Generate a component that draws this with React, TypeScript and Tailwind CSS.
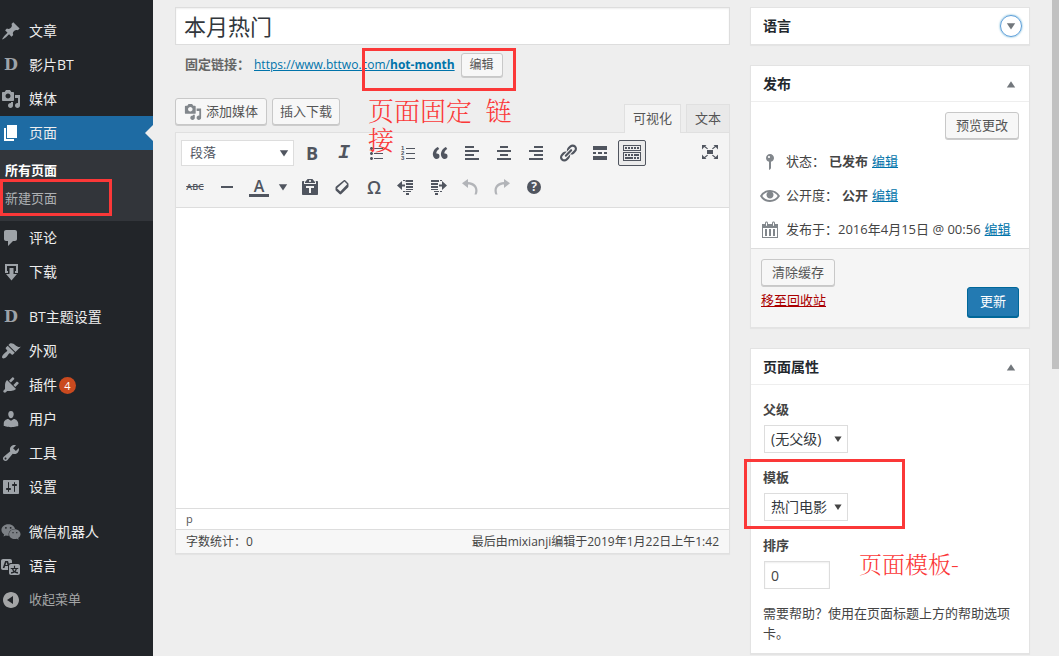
import type { ReactNode } from "react"
import { FaWeixin } from "react-icons/fa"

const icons = {
    post: "M10.44 3.02l1.82-1.82 6.36 6.35-1.83 1.82c-1.05-.68-2.48-.57-3.41.36l-.75.75c-.92.93-1.04 2.35-.35 3.41l-1.83 1.82-2.41-2.41-2.8 2.79c-.42.42-3.38 2.71-3.8 2.29s1.86-3.39 2.28-3.81l2.79-2.79L4.1 9.36l1.83-1.82c1.05.69 2.48.57 3.4-.36l.75-.75c.93-.92 1.05-2.35.36-3.41z",
    media: "M13 11V4c0-.55-.45-1-1-1h-1.67L9 1H5L3.67 3H2c-.55 0-1 .45-1 1v7c0 .55.45 1 1 1h10c.55 0 1-.45 1-1zM7 4.5c1.38 0 2.5 1.12 2.5 2.5S8.38 9.5 7 9.5 4.5 8.38 4.5 7 5.62 4.5 7 4.5zM14 6h5v10.5c0 1.38-1.12 2.5-2.5 2.5S14 17.88 14 16.5s1.12-2.5 2.5-2.5c.17 0 .34.02.5.05V9h-3V6zm-4 8.05V13h2v3.5c0 1.38-1.12 2.5-2.5 2.5S7 17.88 7 16.5 8.12 14 9.5 14c.17 0 .34.02.5.05z",
    page: "M6 15V2h10v13H6zm-1 1h8v2H3V5h2v11z",
    comments: "M5 2h9c1.1 0 2 .9 2 2v7c0 1.1-.9 2-2 2h-2l-5 5v-5H5c-1.1 0-2-.9-2-2V4c0-1.1.9-2 2-2z",
    download: "M4 2h13v9h-3V9h1V4H6v5h1v2H4zM8.5 6h4v6H16l-5.5 6.5L5 12h3.500z",
    appearance: "M14.48 11.06L7.41 3.99l1.5-1.5c.5-.56 2.3-.47 3.51.32 1.21.8 1.43 1.28 2.91 2.1 1.18.64 2.45 1.26 4.45.85zm-.71.71L6.7 4.7 4.93 6.47c-.39.39-.39 1.02 0 1.41l1.06 1.06c.39.39.39 1.03 0 1.42-.6.6-1.43 1.11-2.21 1.69-.35.26-.7.53-1.01.84C1.43 14.23.4 16.08 1.4 17.07c.99 1 2.84-.03 4.18-1.36.31-.31.58-.66.85-1.02.57-.78 1.08-1.61 1.69-2.21.39-.39 1.02-.39 1.41 0l1.06 1.06c.39.39 1.02.39 1.41 0z",
    plugins: "M13.11 4.36L9.87 7.6 8 5.73l3.24-3.24c.35-.34 1.05-.2 1.56.32.52.51.66 1.21.31 1.55zm-8 1.77l.91-1.12 9.01 9.01-1.19.84c-.71.71-2.63 1.16-3.82 1.16H6.14L4.9 17.26c-.59.59-1.54.59-2.12 0-.59-.58-.59-1.53 0-2.12l1.24-1.24v-3.88c0-1.13.4-3.19 1.09-3.89zm7.26 3.97l3.24-3.24c.34-.35 1.04-.21 1.55.31.52.51.66 1.21.31 1.55l-3.24 3.25z",
    users: "M10 9.25c-2.27 0-2.73-3.44-2.73-3.44C7 4.02 7.82 2 9.97 2c2.16 0 2.98 2.02 2.71 3.81 0 0-.41 3.44-2.68 3.44zm0 2.57L12.72 10c2.39 0 4.52 2.33 4.52 4.53v2.49s-3.65 1.13-7.24 1.13c-3.65 0-7.24-1.13-7.24-1.13v-2.49c0-2.25 1.94-4.48 4.47-4.48z",
    tools: "M16.68 9.77c-1.34 1.34-3.3 1.67-4.95.99l-5.41 6.52c-.99.99-2.59.99-3.58 0s-.99-2.59 0-3.57l6.52-5.42c-.68-1.65-.35-3.61.99-4.95 1.28-1.28 3.12-1.62 4.72-1.06l-2.89 2.89 2.82 2.82 2.86-2.87c.53 1.58.18 3.39-1.08 4.65zM3.81 16.21c.4.39 1.04.39 1.43 0 .4-.4.4-1.04 0-1.43-.39-.4-1.03-.4-1.43 0-.39.39-.39 1.03 0 1.43z",
    settings: "M18 16V4c0-.55-.45-1-1-1H3c-.55 0-1 .45-1 1v12c0 .55.45 1 1 1h14c.55 0 1-.45 1-1zM8 11h1c.55 0 1 .45 1 1s-.45 1-1 1H8v1.5c0 .28-.22.5-.5.5s-.5-.22-.5-.5V13H6c-.55 0-1-.45-1-1s.45-1 1-1h1V5.5c0-.28.22-.5.5-.5s.5.22.5.5V11zm5-2h-1c-.55 0-1-.45-1-1s.45-1 1-1h1V5.5c0-.28.22-.5.5-.5s.5.22.5.5V7h1c.55 0 1 .45 1 1s-.45 1-1 1h-1v5.5c0 .28-.22.5-.5.5s-.5-.22-.5-.5V9z",
    translation: "M11 7H9.49c-.63 0-1.25.3-1.59.7L7 5H4.13l-2.39 7h1.69l.74-2H7v4H2c-1.1 0-2-.9-2-2V5c0-1.1.9-2 2-2h7c1.1 0 2 .9 2 2v2zM6.51 9H4.49l1-2.93zM10 8h7c1.1 0 2 .9 2 2v7c0 1.1-.9 2-2 2h-7c-1.1 0-2-.9-2-2v-7c0-1.1.9-2 2-2zm7.25 5v-1.08h-3.17V9.75h-1.16v2.17H9.75V13h1.28c.11.85.56 1.85 1.28 2.62-.87.36-1.89.62-2.31.62-.01.02.22.97.2 1.46.84 0 2.21-.5 3.28-1.15 1.09.65 2.48 1.15 3.34 1.15-.02-.49.2-1.44.2-1.46-.43 0-1.49-.27-2.38-.63.7-.77 1.14-1.77 1.25-2.61h1.36zm-3.81 1.93c-.5-.46-.85-1.13-1.01-1.93h2.09c-.17.8-.51 1.47-1 1.93l-.04.03s-.03-.02-.04-.03z",
    collapse: "M10 2c4.42 0 8 3.58 8 8s-3.58 8-8 8-8-3.58-8-8 3.58-8 8-8zm2 4l-6 4 6 4z",
    ul: "M5.5 7C4.67 7 4 6.33 4 5.5 4 4.68 4.67 4 5.5 4 6.32 4 7 4.68 7 5.5 7 6.33 6.32 7 5.5 7zM8 5h9v1H8V5zm-2.5 7c-.83 0-1.5-.67-1.5-1.5C4 9.68 4.67 9 5.5 9c.82 0 1.5.68 1.5 1.5 0 .83-.68 1.5-1.5 1.5zM8 10h9v1H8v-1zm-2.5 7c-.83 0-1.5-.67-1.5-1.5 0-.82.67-1.5 1.5-1.5.82 0 1.5.68 1.5 1.5 0 .83-.68 1.5-1.5 1.5zM8 15h9v1H8v-1z",
    quote: "M9.49 13.22c0-.74-.2-1.38-.61-1.9-.62-.78-1.83-.88-2.53-.72-.29-1.65 1.11-3.75 2.92-4.65L7.88 4c-2.73 1.3-5.42 4.28-4.96 8.05C3.21 14.43 4.59 16 6.54 16c.85 0 1.56-.25 2.12-.75s.83-1.18.83-2.03zm8.05 0c0-.74-.2-1.38-.61-1.9-.63-.78-1.83-.88-2.53-.72-.29-1.65 1.11-3.75 2.92-4.65L15.93 4c-2.73 1.3-5.41 4.28-4.95 8.05.29 2.38 1.66 3.95 3.61 3.95.85 0 1.56-.25 2.12-.75s.83-1.18.83-2.03z",
    left: "M12 5V3H3v2h9zm5 4V7H3v2h14zm-5 4v-2H3v2h9zm5 4v-2H3v2h14z",
    center: "M14 5V3H6v2h8zm3 4V7H3v2h14zm-3 4v-2H6v2h8zm3 4v-2H3v2h14z",
    right: "M17 5V3H8v2h9zm0 4V7H3v2h14zm0 4v-2H8v2h9zm0 4v-2H3v2h14z",
    link: "M17.74 2.76c1.68 1.69 1.68 4.41 0 6.1l-1.53 1.52c-1.12 1.12-2.7 1.47-4.14 1.09l2.62-2.61.76-.77.76-.76c.84-.84.84-2.2 0-3.04-.84-.85-2.2-.85-3.04 0l-.77.76-3.38 3.38c-.37-1.44-.02-3.02 1.1-4.14l1.52-1.53c1.69-1.68 4.42-1.68 6.1 0zM8.59 13.43l5.34-5.34c.42-.42.42-1.1 0-1.52-.44-.43-1.13-.39-1.53 0l-5.33 5.34c-.42.42-.42 1.1 0 1.52.44.43 1.13.39 1.52 0zm-.76 2.29l4.14-4.15c.38 1.44.03 3.02-1.09 4.14l-1.52 1.53c-1.69 1.68-4.41 1.68-6.1 0-1.68-1.68-1.68-4.42 0-6.1l1.53-1.52c1.12-1.12 2.7-1.47 4.14-1.1l-4.14 4.15c-.85.84-.85 2.2 0 3.05.84.84 2.2.84 3.04 0z",
    more: "M17 7V3H3v4h14zM6 11V9H3v2h3zm6 0V9H8v2h4zm5 0V9h-3v2h3zm0 6v-4H3v4h14z",
    sink: "M19 2v6H1V2h18zm-1 5V3H2v4h16zM5 4v2H3V4h2zm3 0v2H6V4h2zm3 0v2H9V4h2zm3 0v2h-2V4h2zm3 0v2h-2V4h2zm2 5v9H1V9h18zm-1 8v-7H2v7h16zM5 11v2H3v-2h2zm3 0v2H6v-2h2zm3 0v2H9v-2h2zm6 0v2h-5v-2h5zm-6 3v2H3v-2h8zm3 0v2h-2v-2h2zm3 0v2h-2v-2h2z",
    expand: "M7 7h6v4H7zM2 2h4.500L5.200 3.300 8 5.500l-.8.8L4.200 4 2 6.500zM18 2h-4.500l1.300 1.300L12 5.500l.8.8L15.800 4 18 6.500zM2 16h4.500l-1.300-1.300L8 12.500l-.8-.8L4.200 14 2 11.500zM18 16h-4.500l1.300-1.300-2.800-2.200.8-.8 3 2.300 2.200-2.500z",
    hr: "M4 9h12v2H4z",
    paste: "M12.38 2L15 5v1H5V5l2.64-3h4.74zM10 5c.55 0 1-.44 1-1 0-.55-.45-1-1-1s-1 .45-1 1c0 .56.45 1 1 1zm5.45-1H17c.55 0 1 .45 1 1v12c0 .56-.45 1-1 1H3c-.55 0-1-.44-1-1V5c0-.55.45-1 1-1h1.55L4 4.63V7h12V4.63zM14 11V9H6v2h3v5h2v-5h3z",
    clear: "M11.800 3.200c.5-.4 1-.4 1.400 0l2.800 2.700c.3.300.5.700.5 1.100v2.200c0 .5-.2.900-.5 1.200l-6.700 6.700c-.5.500-1.300.5-1.800 0l-3.500-3.300c-.3-.3-.5-.7-.5-1.100v-2c0-.4.2-.8.5-1.100zM12.500 4.600L5 11.200l3.300 3.200L15.200 7.200z",
    outdent: "M7 3h2v1H7zM9.500 3H17v2H9.500zM10 6h7v2h-7zM10 9h7v2h-7zM10 12h7v1h-7zM7 14h2v1H7zM9.500 14H15v1H9.500zM10 16h3v2h-3zM1 8.500L6 4v3.500h3v2H6V13z",
    indent: "M3 3h8v2H3zM12 3h2v1h-2zM3 6h7v2H3zM3 9h7v2H3zM3 12h7v1H3zM6 14h5v1H6zM12 14h2v1h-2zM7 16h3v2H7zM19 8.500L14 4v3.500h-3v2h3V13z",
    undo: "M8 2v3c6 0 9.500 4 9.500 8.500 0 2-.5 3-1 4h-2c.5-1.500.8-2.500.8-4C15.300 10 12 7.500 8 7.500V11L2 6.300z",
    redo: "M12 2v3c-6 0-9.500 4-9.500 8.500 0 2 .5 3 1 4h2c-.5-1.500-.8-2.500-.8-4C4.700 10 8 7.500 12 7.500V11l6-4.700z",
    status: "M14 6c0 1.860-1.280 3.410-3 3.860V16c0 1-2 2-2 2V9.860c-1.720-.45-3-2-3-3.860 0-2.210 1.790-4 4-4s4 1.790 4 4zM8 5c0 .55.45 1 1 1s1-.45 1-1-.45-1-1-1-1 .45-1 1z",
    eye: "M19.7 9.4C17.7 6 14 3.9 10 3.9S2.3 6 .3 9.4L0 10l.3.6c2 3.4 5.7 5.5 9.7 5.5s7.7-2.1 9.7-5.5l.3-.6-.3-.6zM10 14.1c-3.1 0-6-1.6-7.7-4.1C3.6 8 5.7 6.6 8 6.1c-.9.6-1.5 1.7-1.5 2.9 0 1.9 1.6 3.5 3.5 3.5s3.5-1.6 3.5-3.5c0-1.2-.6-2.3-1.5-2.9 2.3.5 4.4 1.9 5.7 3.9-1.7 2.5-4.6 4.1-7.7 4.1z",
    calendar: "M15 4h3v14H2V4h3V3c0-.83.67-1.5 1.5-1.5S8 2.17 8 3v1h4V3c0-.83.67-1.5 1.5-1.5S15 2.17 15 3v1zM6 3v2.5c0 .28.22.5.5.5s.5-.22.5-.5V3c0-.28-.22-.5-.5-.5S6 2.72 6 3zm7 0v2.5c0 .28.22.5.5.5s.5-.22.5-.5V3c0-.28-.22-.5-.5-.5s-.5.22-.5.5zm4 14V8H3v9h14zM7 16V9H5v7h2zm4 0V9H9v7h2zm4 0V9h-2v7h2z",
    down: "M4 6h12l-6 9z",
    up: "M4 15h12l-6-9z",
}

type IconName = keyof typeof icons

const Icon = ({ name, className = "size-5" }: { name: IconName; className?: string }) => (
    <svg viewBox="0 0 20 20" fill="currentColor" fillRule="evenodd" className={`shrink-0 ${className}`} aria-hidden="true">
        <path d={icons[name]} />
    </svg>
)

const Logo = () => <span className="w-5 text-center font-['DejaVu_Serif'] text-base leading-5 font-bold">D</span>

const MenuItem = ({ icon, label, badge, active }: { icon: ReactNode; label: string; badge?: number; active?: boolean }) => (
    <li className={active ? "relative bg-[#1e6ba3] text-white" : "text-[#9ea3a8]"}>
        <a href="#" className="flex h-[34px] items-center gap-2 pl-px text-sm">
            {icon}
            <span className="text-[#eee]">{label}</span>
            {badge && (
                <span className="-ml-1.5 size-[17px] rounded-full bg-[#ca4a1f] text-center text-[11px] leading-[17px] text-white">{badge}</span>
            )}
        </a>
        {active && <span className="absolute top-[9px] right-0 border-y-8 border-r-8 border-y-transparent border-r-[#eee]" />}
    </li>
)

const Sidebar = () => (
    <nav className="w-[153px] shrink-0 bg-[#222529] pt-3.5">
        <ul>
            <MenuItem icon={<Icon name="post" />} label="文章" />
            <MenuItem icon={<Logo />} label="影片BT" />
            <MenuItem icon={<Icon name="media" />} label="媒体" />
            <MenuItem icon={<Icon name="page" />} label="页面" active />
        </ul>
        <div className="relative bg-[#32353a] pt-1.5 pb-[9px] pl-[5px] text-[13px] leading-7">
            <ul>
                <li>
                    <a href="#" className="block font-bold text-white">所有页面</a>
                </li>
                <li>
                    <a href="#" className="block text-[#adb0b3]">新建页面</a>
                </li>
            </ul>
            <span className="absolute top-[29px] left-0 h-[37px] w-28 border-3 border-[#fb3838]" />
        </div>
        <ul>
            <MenuItem icon={<Icon name="comments" />} label="评论" />
            <MenuItem icon={<Icon name="download" />} label="下载" />
        </ul>
        <ul className="mt-[11px]">
            <MenuItem icon={<Logo />} label="BT主题设置" />
            <MenuItem icon={<Icon name="appearance" />} label="外观" />
            <MenuItem icon={<Icon name="plugins" />} label="插件" badge={4} />
            <MenuItem icon={<Icon name="users" />} label="用户" />
            <MenuItem icon={<Icon name="tools" />} label="工具" />
            <MenuItem icon={<Icon name="settings" />} label="设置" />
        </ul>
        <ul className="mt-[11px]">
            <MenuItem icon={<FaWeixin className="size-5 shrink-0 text-[#7c8085]" />} label="微信机器人" />
            <MenuItem icon={<Icon name="translation" />} label="语言" />
        </ul>
        <button className="flex h-[34px] items-center gap-2 pl-px text-[13px] text-[#a4a5a6]">
            <Icon name="collapse" />
            收起菜单
        </button>
    </nav>
)

const Button = ({ className, children }: { className: string; children: ReactNode }) => (
    <button className={`flex items-center justify-center rounded-[3px] border border-[#c8c8c8] bg-[#f7f7f7] text-[#555] shadow-[0_1px_0_#ccc] ${className}`}>
        {children}
    </button>
)

const Tool = ({ label, children, className = "w-8" }: { label: string; children: ReactNode; className?: string }) => (
    <button aria-label={label} className={`flex h-[26px] items-center justify-center ${className}`}>
        {children}
    </button>
)

const Toolbar = () => (
    <div className="border-b border-[#ddd] bg-[#f4f4f4] px-[5px] py-[7px] text-[#50555f]">
        <div className="flex items-center">
            <div className="relative mr-0.5 w-[113px]">
                <select aria-label="格式" className="block h-[26px] w-full appearance-none border border-[#ddd] bg-white px-2 text-[13px]">
                    <option>段落</option>
                </select>
                <Icon name="down" className="pointer-events-none absolute top-1.5 right-[3px] size-3.5" />
            </div>
            <Tool label="粗体"><b className="text-lg">B</b></Tool>
            <Tool label="斜体"><i className="font-['Liberation_Mono'] text-xl leading-5 font-bold">I</i></Tool>
            <Tool label="项目符号列表"><Icon name="ul" /></Tool>
            <Tool label="编号列表">
                <svg viewBox="0 0 20 20" fill="currentColor" className="size-5 font-['Liberation_Sans'] font-bold">
                    <path d="M8 5h9v1H8zM8 10h9v1H8zM8 15h9v1H8z" />
                    <text x="3" y="7" fontSize="6">1</text>
                    <text x="3" y="12" fontSize="6">2</text>
                    <text x="3" y="17" fontSize="6">3</text>
                </svg>
            </Tool>
            <Tool label="段落引用"><Icon name="quote" /></Tool>
            <Tool label="左对齐"><Icon name="left" /></Tool>
            <Tool label="居中对齐"><Icon name="center" /></Tool>
            <Tool label="右对齐"><Icon name="right" /></Tool>
            <Tool label="插入链接"><Icon name="link" /></Tool>
            <Tool label="插入More标签"><Icon name="more" /></Tool>
            <Tool label="工具栏开关" className="mx-0.5 w-7 rounded-xs border border-[#50555f] bg-[#ebebeb]"><Icon name="sink" /></Tool>
            <Tool label="全屏" className="ml-auto w-7"><Icon name="expand" /></Tool>
        </div>
        <div className="mt-2 flex items-center pr-7">
            <Tool label="删除线" className="w-7"><s className="text-[9px] font-semibold">ABC</s></Tool>
            <Tool label="水平线" className="mx-0.5 w-8"><Icon name="hr" /></Tool>
            <Tool label="文字颜色" className="w-7">
                <span className="h-[19px] w-5 border-b-3 border-[#50555f] text-center text-base leading-4 font-semibold">A</span>
            </Tool>
            <Tool label="选择颜色" className="mr-px w-5"><Icon name="down" className="size-3.5" /></Tool>
            <Tool label="粘贴为文本"><Icon name="paste" /></Tool>
            <Tool label="清除格式"><Icon name="clear" /></Tool>
            <Tool label="特殊字符"><span className="text-lg font-semibold">Ω</span></Tool>
            <Tool label="减少缩进量"><Icon name="outdent" /></Tool>
            <Tool label="增加缩进量"><Icon name="indent" /></Tool>
            <span className="flex opacity-40">
                <Tool label="撤销"><Icon name="undo" /></Tool>
                <Tool label="重做"><Icon name="redo" /></Tool>
            </span>
            <Tool label="键盘快捷键">
                <span className="size-3.5 rounded-full bg-[#50555f] text-xs leading-3.5 font-bold text-[#f4f4f4]">?</span>
            </Tool>
        </div>
    </div>
)

const Editor = () => (
    <main className="min-w-0 flex-1">
        <input
            aria-label="标题"
            defaultValue="本月热门"
            className="block h-[38px] w-full border border-[#ddd] bg-white px-2 pb-0.5 text-[22px] text-[#32373c] shadow-[inset_0_1px_2px_rgba(0,0,0,0.07)]"
        />
        <div className="relative mt-2 flex h-6 items-center pl-2.5 text-[13px] text-[#666]">
            <strong className="w-[69px]">固定链接：</strong>
            <a href="#" className="text-xs text-[#0073aa] underline">
                https://www.bttwo.com/<b>hot-month</b>
            </a>
            <Button className="ml-1.5 h-6 w-[42px] text-xs">编辑</Button>
            <span className="absolute -top-[5px] left-[187px] h-[43px] w-[154px] border-3 border-[#fb3838]" />
            <p className="absolute top-[42px] left-[193px] w-[160px] font-['Noto_Serif_CJK_SC','Noto_Sans_CJK_SC',serif] text-[26px] leading-[29px] font-light whitespace-pre-wrap text-[#fb3838]">
                {"页面固定  链接"}
            </p>
        </div>
        <div className="mt-[21px] flex items-start">
            <Button className="mr-[5px] h-[27px] w-[92px] gap-1 text-[13px]">
                <Icon name="media" className="size-[18px] text-[#82878c]" />
                添加媒体
            </Button>
            <Button className="h-[27px] w-[68px] text-[13px]">插入下载</Button>
            <div className="mt-1.5 ml-auto flex items-start gap-[5px] text-[13px] text-[#555]">
                <button className="relative z-10 -mb-px h-[29px] w-[57px] border border-b-0 border-[#e0e0e0] bg-[#f4f4f4]">可视化</button>
                <button className="h-7 w-11 border border-b-0 border-[#e0e0e0] bg-[#e9e9e9]">文本</button>
            </div>
        </div>
        <section className="border border-[#e0e0e0] bg-white shadow-[0_1px_1px_rgba(0,0,0,0.04)]">
            <Toolbar />
            <textarea aria-label="正文" className="block h-[300px] w-full resize-none" />
            <p className="h-[21px] border-t border-[#ddd] px-2.5 text-[11px] leading-5 text-[#555]">p</p>
            <div className="flex h-6 items-center justify-between border-t border-[#ddd] bg-[#f7f7f7] px-2.5 text-xs text-[#444]">
                <span>字数统计：0</span>
                <span>最后由mixianji编辑于2019年1月22日上午1:42</span>
            </div>
        </section>
    </main>
)

const PanelTitle = ({ children }: { children: ReactNode }) => (
    <header className="flex h-9 items-center justify-between border-b border-[#eee] pr-[11px] pl-3 text-[#23282d]">
        <h2 className="text-sm font-bold">{children}</h2>
        <button aria-label="切换面板" className="text-[#72777c]">
            <Icon name="up" className="size-3.5" />
        </button>
    </header>
)

const panel = "border border-[#e3e3e3] bg-white shadow-[0_1px_1px_rgba(0,0,0,0.04)]"

const EditLink = () => <a href="#" className="ml-1 text-[#0073aa] underline">编辑</a>

const StatusRow = ({ icon, label, value }: { icon: IconName; label: string; value: string }) => (
    <li className="flex h-[34px] items-center">
        <Icon name={icon} className="mr-1.5 size-5 text-[#82878c]" />
        <span>{label}</span>
        <strong className="ml-1">{value}</strong>
        <EditLink />
    </li>
)

const Select = ({ id, label, option }: { id: string; label: string; option: string }) => (
    <div className="h-[68px]">
        <label htmlFor={id} className="block leading-5 font-bold">{label}</label>
        <div className="relative mt-1.5 ml-px w-[84px]">
            <select id={id} className="block h-7 w-full appearance-none border border-[#ddd] bg-white px-1.5 text-sm text-[#32373c]">
                <option>{option}</option>
            </select>
            <Icon name="down" className="pointer-events-none absolute top-2 right-1 size-3" />
        </div>
    </div>
)

const SidePanels = () => (
    <aside className="w-[280px] shrink-0 text-[13px] text-[#444]">
        <section className={`flex h-[38px] items-center justify-between pr-[7px] pl-3 ${panel}`}>
            <h2 className="text-sm font-bold text-[#23282d]">语言</h2>
            <button aria-label="切换面板" className="flex size-[22px] items-center justify-center rounded-full border border-[#5b9dd9] text-[#72777c] shadow-[0_0_2px_rgba(30,140,190,0.8)]">
                <Icon name="down" className="size-3.5" />
            </button>
        </section>

        <section className={`mt-5 ${panel}`}>
            <PanelTitle>发布</PanelTitle>
            <div className="flex justify-end px-2.5 pt-2.5">
                <Button className="h-[27px] w-[74px] text-[13px]">预览更改</Button>
            </div>
            <ul className="px-[9px] pt-1.5 pb-px">
                <StatusRow icon="status" label="状态：" value="已发布" />
                <StatusRow icon="eye" label="公开度：" value="公开" />
                <li className="flex h-[34px] items-center whitespace-nowrap">
                    <Icon name="calendar" className="mr-1.5 size-5 text-[#82878c]" />
                    发布于：2016年4月15日 @ 00:56
                    <EditLink />
                </li>
            </ul>
            <div className="flex h-[79px] items-end justify-between border-t border-[#ddd] bg-[#f5f5f5] px-2.5 pb-2.5">
                <div className="flex h-full flex-col pt-2.5">
                    <Button className="h-[27px] w-[74px] text-[13px]">清除缓存</Button>
                    <a href="#" className="mt-1 leading-5 text-[#a00] underline">移至回收站</a>
                </div>
                <button className="h-[30px] w-[52px] rounded-[3px] border border-[#006799] bg-[#237ab2] text-[13px] text-white shadow-[0_1px_0_#006799]">更新</button>
            </div>
        </section>

        <section className={`relative mt-5 ${panel}`}>
            <PanelTitle>页面属性</PanelTitle>
            <div className="px-3 pt-3.5 pb-2.5">
                <Select id="parent" label="父级" option="(无父级)" />
                <Select id="template" label="模板" option="热门电影" />
                <label htmlFor="order" className="block leading-5 font-bold">排序</label>
                <input id="order" defaultValue="0" className="mt-1.5 ml-px block h-7 w-[66px] border border-[#ddd] px-1.5 text-sm shadow-[inset_0_1px_2px_rgba(0,0,0,0.07)]" />
                <p className="mt-3.5 leading-5">需要帮助？使用在页面标题上方的帮助选项卡。</p>
            </div>
            <span className="absolute top-[110px] -left-[7px] h-[70px] w-[161px] border-3 border-[#fb3838]" />
            <p className="absolute top-[199px] left-[108px] font-['Noto_Serif_CJK_SC','Noto_Sans_CJK_SC',serif] text-[23px] leading-8 font-light text-[#fb3838]">
                页面模板-
            </p>
        </section>
    </aside>
)

const App = () => {
    return (
        <div className="flex min-h-screen bg-[#eee] font-['Open_Sans','Noto_Sans_CJK_SC',sans-serif]">
            <Sidebar />
            <div className="flex min-w-0 flex-1 gap-5 px-[22px] pt-[7px]">
                <Editor />
                <SidePanels />
            </div>
            <div className="h-[369px] w-[7px] shrink-0 bg-[#c1c1c1]" />
        </div>
    )
}

export default App
